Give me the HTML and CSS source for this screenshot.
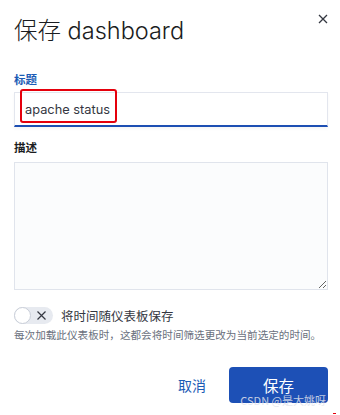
FILE: index.html
```html
<!DOCTYPE html>
<html lang="zh-CN">
<head>
    <meta charset="UTF-8">
    <title>保存 dashboard</title>
    <link rel="stylesheet" href="styles.css">
</head>
<body>
    <div class="modal">
      <!-- 닫기 -->
      <button class="close" aria-label="关闭">
        <svg width="10" height="10" viewBox="0 0 10 10">
          <path d="M1 1L9 9M9 1L1 9" stroke="#343741" stroke-width="1.3" fill="none"/>
        </svg>
      </button>

      <h1 class="title">保存 dashboard</h1>

      <label class="lbl lbl-on">标题</label>
      <div class="field">
        <input class="inp" type="text" value="apache status">
        <span class="mark"></span>
      </div>

      <label class="lbl">描述</label>
      <textarea class="area"></textarea>

      <div class="sw-row">
        <span class="sw">
          <span class="knob"></span>
          <svg class="sw-x" width="11" height="11" viewBox="0 0 11 11">
            <path d="M1.5 1.5L9.5 9.5M9.5 1.5L1.5 9.5" stroke="#343741" stroke-width="1.2" fill="none"/>
          </svg>
        </span>
        <span class="sw-txt">将时间随仪表板保存</span>
      </div>
      <p class="help">每次加载此仪表板时，这都会将时间筛选更改为当前选定的时间。</p>

      <div class="foot">
        <button class="btn-empty">取消</button>
        <button class="btn-fill">保存</button>
      </div>
    </div>

    <div class="wm">CSDN @是大姚呀</div>
    <span class="dot"></span>
</body>
</html>
```

FILE: styles.css
```css
html, body{
  margin: 0;
  background: #fff;
}
body{
  width: 340px;
  height: 415px;
  position: relative;
  overflow: hidden;
  font-family: Inter, "Noto Sans CJK SC", sans-serif;
  color: #343741;
}

.modal{
  display: flex;
  flex-direction: column;
  padding: 16px 12px 0 14px;
}

/* 닫기버튼 */
.close{
  position: absolute;
  top: 13px;
  right: 11px;
  width: 12px;
  height: 12px;
  padding: 0;
  border: 0;
  background: none;
  display: flex;
  align-items: center;
  justify-content: center;
}

.title{
  margin: 0;
  font-size: 23.5px;
  line-height: 30px;
  font-weight: 300;
  color: #1a1c21;
}

.lbl{
  font-size: 11.5px;
  line-height: 14px;
  font-weight: 700;
  color: #1a1c21;
  margin-top: 14px;
}
.lbl-on{
  color: #1b5cb5;
  margin-top: 27px;
}

.field{
  position: relative;
  margin-top: 5px;
}
.inp{
  box-sizing: border-box;
  display: block;
  width: 100%;
  height: 35px;
  margin: 0;
  padding: 0 10px;
  border: 1px solid #e3e6ee;
  border-bottom: 2px solid #1d4fb3;
  background: #fff;
  font-family: Inter, sans-serif;
  font-size: 12.8px;
  color: #343741;
  outline: none;
  box-shadow: 0 2px 3px rgba(0,0,0,0.04);
}
/* 빨간 표시박스 */
.mark{
  position: absolute;
  left: 6px;
  top: -3px;
  width: 97px;
  height: 34px;
  box-sizing: border-box;
  border: 2px solid #e5000c;
  border-radius: 3px;
}

.area{
  box-sizing: border-box;
  display: block;
  width: 100%;
  height: 128px;
  margin-top: 7px;
  border: 1px solid #e0e4ec;
  background: #fbfcfd;
  resize: vertical;
}

/* 토글 */
.sw-row{
  display: flex;
  align-items: center;
  gap: 8px;
  margin-top: 17px;
  height: 17px;
}
.sw{
  position: relative;
  width: 39px;
  height: 17px;
  border-radius: 9px;
  background: #e7eaf0;
  flex: none;
}
.knob{
  position: absolute;
  left: 0;
  top: 0;
  width: 17px;
  height: 17px;
  box-sizing: border-box;
  border-radius: 50%;
  background: #fff;
  border: 1px solid #c9ced8;
}
.sw-x{
  position: absolute;
  left: 22px;
  top: 3px;
}
.sw-txt{
  font-size: 12.5px;
  color: #343741;
}

.help{
  margin: 5px 0 0;
  font-size: 10.6px;
  line-height: 14px;
  color: #69707d;
  white-space: nowrap;
}

.foot{
  display: flex;
  justify-content: flex-end;
  align-items: center;
  gap: 11px;
  margin-top: 24px;
}
.btn-empty{
  border: 0;
  background: none;
  padding: 0 12px;
  height: 36px;
  font-family: "Noto Sans CJK SC", sans-serif;
  font-size: 14px;
  color: #1b5cb5;
}
.btn-fill{
  width: 99px;
  height: 36px;
  border: 0;
  border-radius: 4px;
  background: #1d50b6;
  color: #fff;
  font-family: "Noto Sans CJK SC", sans-serif;
  font-size: 15.5px;
}

/* 워터마크 */
.wm{
  position: absolute;
  right: 14px;
  bottom: 8px;
  font-family: "Noto Sans CJK SC", sans-serif;
  font-size: 11px;
  line-height: 14px;
  color: rgba(225,228,236,0.85);
}
.dot{
  position: absolute;
  right: 4px;
  bottom: 1px;
  width: 3px;
  height: 1px;
  background: #e5000c;
}
```
